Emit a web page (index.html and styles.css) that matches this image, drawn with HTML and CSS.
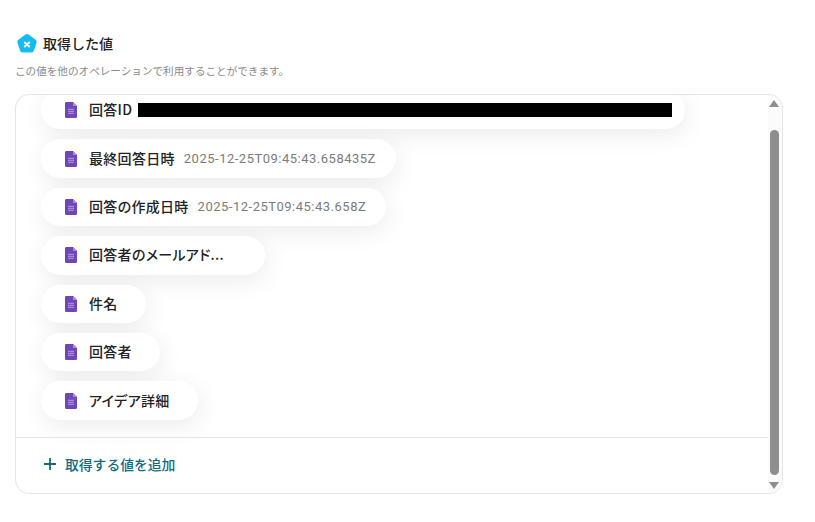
FILE: index.html
```html
<!DOCTYPE html>
<html lang="ja">
<head>
    <meta charset="UTF-8">
    <title>取得した値</title>
    <link rel="stylesheet" href="styles.css">
</head>
<body>
    <div class="section">
        <div class="title-row">
            <svg class="title-icon" width="22" height="22" viewBox="0 0 22 22">
                <path d="M9.4 1.600a2.600 2.600 0 0 1 3.200 0l7 5.100a2.600 2.600 0 0 1 1 2.900l-2.700 8.200a2.600 2.600 0 0 1-2.500 1.800H6.600a2.600 2.600 0 0 1-2.500-1.800L1.400 9.600a2.600 2.600 0 0 1 1-2.900z" fill="#14bdf0"/>
                <path d="M8.800 9.500l4.400 4M13.200 9.500l-4.400 4" stroke="#fff" stroke-width="1.900" stroke-linecap="round" fill="none"/>
            </svg>
            <h2 class="title">取得した値</h2>
        </div>
        <p class="note">この値を他のオペレーションで利用することができます。</p>

        <div class="panel">
            <div class="panel-main">
                <div class="value-list">
                    <div class="pill pill-id">
                        <svg class="form-icon" width="12" height="16" viewBox="0 0 12 16"><use href="#form"/></svg>
                        <span class="pill-name">回答ID</span>
                        <span class="redacted"></span>
                    </div>
                    <div class="pill pill-wide">
                        <svg class="form-icon" width="12" height="16" viewBox="0 0 12 16"><use href="#form"/></svg>
                        <span class="pill-name">最終回答日時</span>
                        <span class="pill-value">2025-12-25T09:45:43.658435Z</span>
                    </div>
                    <div class="pill pill-wide">
                        <svg class="form-icon" width="12" height="16" viewBox="0 0 12 16"><use href="#form"/></svg>
                        <span class="pill-name">回答の作成日時</span>
                        <span class="pill-value">2025-12-25T09:45:43.658Z</span>
                    </div>
                    <div class="pill">
                        <svg class="form-icon" width="12" height="16" viewBox="0 0 12 16"><use href="#form"/></svg>
                        <span class="pill-name pill-name-clip">回答者のメールアド...</span>
                    </div>
                    <div class="pill">
                        <svg class="form-icon" width="12" height="16" viewBox="0 0 12 16"><use href="#form"/></svg>
                        <span class="pill-name">件名</span>
                    </div>
                    <div class="pill">
                        <svg class="form-icon" width="12" height="16" viewBox="0 0 12 16"><use href="#form"/></svg>
                        <span class="pill-name">回答者</span>
                    </div>
                    <div class="pill">
                        <svg class="form-icon" width="12" height="16" viewBox="0 0 12 16"><use href="#form"/></svg>
                        <span class="pill-name">アイデア詳細</span>
                    </div>
                </div>
                <div class="panel-footer">
                    <svg width="14" height="14" viewBox="0 0 14 14">
                        <path d="M7 1v12M1 7h12" stroke="#0f6b80" stroke-width="1.800" fill="none"/>
                    </svg>
                    <span class="add-label">取得する値を追加</span>
                </div>
            </div>
            <div class="scrollbar">
                <span class="arrow-up"></span>
                <span class="thumb"></span>
                <span class="arrow-down"></span>
            </div>
        </div>
    </div>

    <svg width="0" height="0" class="defs">
        <symbol id="form" viewBox="0 0 12 16">
            <path d="M1.200 0H8l4 4v10.800a1.200 1.200 0 0 1-1.200 1.200H1.200A1.200 1.200 0 0 1 0 14.800V1.200A1.200 1.200 0 0 1 1.200 0z" fill="#7146b8"/>
            <path d="M8 0l4 4H8z" fill="#a98bd6"/>
            <path d="M3 7.300h6M3 9.300h6M3 11.300h6" stroke="#b39ddb" stroke-width="1" fill="none"/>
        </symbol>
    </svg>
</body>
</html>
```

FILE: styles.css
```css
body {
    margin: 0;
    background: #fff;
    font-family: "Noto Sans CJK JP", "Noto Sans", sans-serif;
    overflow: hidden;
}

.section {
    padding: 33px 32px 0 15px;
}

.title-row {
    display: flex;
    align-items: center;
    gap: 5px;
    padding-left: 1px;
    height: 22px;
}

.title {
    margin: 0 0 2px;
    font-size: 14px;
    font-weight: 500;
    color: #222;
}

.note {
    margin: 9px 0 0;
    font-size: 10.6px;
    line-height: 14px;
    color: #8a8a8a;
}

.panel {
    display: flex;
    height: 398px;
    margin-top: 16px;
    border: 1px solid #e4e4e4;
    border-radius: 14px;
    overflow: hidden;
}

.panel-main {
    flex: 1;
    min-width: 0;
    display: flex;
    flex-direction: column;
}

.value-list {
    flex: 1;
    min-height: 0;
    display: flex;
    flex-direction: column;
    align-items: flex-start;
    gap: 10px;
    margin-top: -4px;
    padding-left: 25px;
}

.pill {
    display: flex;
    align-items: center;
    height: 38.4px;
    padding: 0 28px 0 24px;
    background: #fff;
    border-radius: 20px;
    box-shadow: 2px 6px 24px rgba(0, 0, 0, 0.08);
}

.pill-wide {
    padding-right: 20px;
}

.pill-id {
    padding-right: 13px;
}

.form-icon {
    flex: none;
    margin-right: 12px;
}

.pill-name {
    padding-bottom: 2px;
    font-size: 14px;
    font-weight: 500;
    font-feature-settings: "palt";
    letter-spacing: 0.3px;
    color: #222;
    white-space: nowrap;
}

.pill-name-clip {
    width: 148px;
}

.pill-value {
    margin-left: 9px;
    font-family: "Roboto", sans-serif;
    font-size: 13px;
    letter-spacing: 0.5px;
    color: #7b7b7b;
    white-space: nowrap;
}

.redacted {
    width: 534px;
    height: 14px;
    margin-left: 6px;
    background: #000;
}

.panel-footer {
    flex: none;
    display: flex;
    align-items: center;
    gap: 8px;
    height: 56px;
    padding: 0 0 4px 27px;
    box-sizing: border-box;
    border-top: 1px solid #e4e4e4;
}

.add-label {
    font-size: 13.8px;
    font-weight: 500;
    color: #0f6b80;
}

.scrollbar {
    flex: none;
    width: 12px;
    padding-right: 2px;
    display: flex;
    flex-direction: column;
    align-items: center;
    background: #fbfbfb;
}

.arrow-up {
    margin-top: 5px;
    border-left: 5px solid transparent;
    border-right: 5px solid transparent;
    border-bottom: 7px solid #8e8e8e;
}

.thumb {
    width: 9px;
    height: 345px;
    margin-top: 23px;
    background: #8e8e8e;
    border-radius: 5px;
}

.arrow-down {
    margin-top: 7px;
    border-left: 5px solid transparent;
    border-right: 5px solid transparent;
    border-top: 7px solid #8e8e8e;
}

.defs {
    position: absolute;
}
```
